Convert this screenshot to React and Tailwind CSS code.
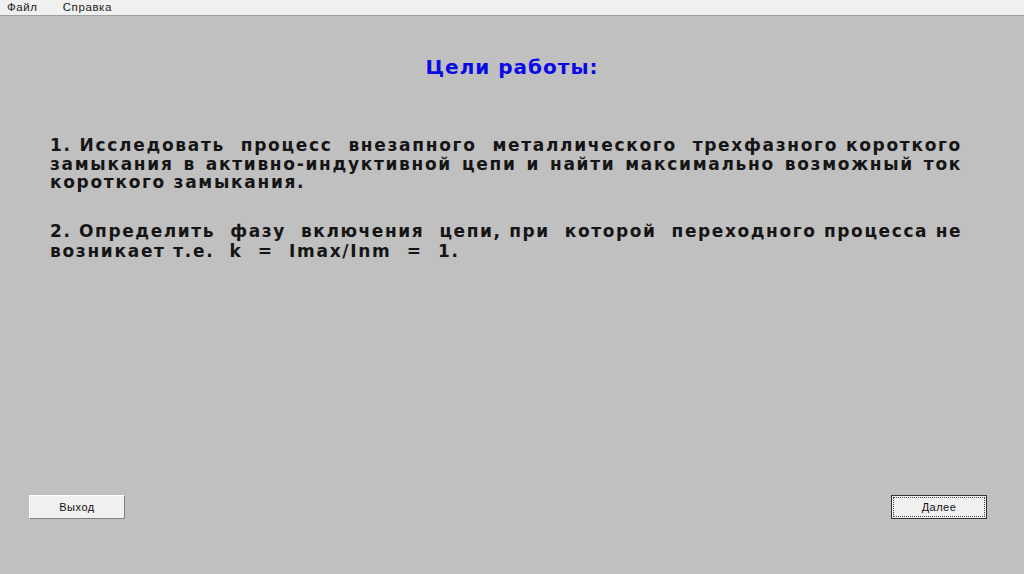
import React from "react";

const lineCls = "text-justify whitespace-pre";
const justify = { textAlignLast: "justify" };

const App = () => {
  return (
    <div className="w-[1024px] h-[574px] flex flex-col bg-[#c0c0c0] overflow-hidden" style={{ fontFamily: "'DejaVu Sans', Verdana, sans-serif" }}>
      <div className="h-[16px] flex items-center gap-[25px] pl-[7px] bg-[#f0f0f0] border-b border-[#a0a0a0] text-[11.5px] leading-none tracking-[0.6px] text-[#222]" style={{ fontFamily: "'Liberation Sans', Arial, sans-serif" }}>
        <span>Файл</span>
        <span>Справка</span>
      </div>
      <div className="flex-1 flex flex-col pl-[50px] pr-[62px]">
        <h1 className="mt-[39px] text-center text-[20px] font-bold tracking-[1px] text-[#0a0ae6] leading-[24px] pl-[12px]">
          Цели работы:
        </h1>
        <div className="mt-[57px] text-[17px] font-bold leading-[18.5px] tracking-[1.7px] text-[#151515]">
          <div className={lineCls} style={justify}>1. Исследовать  процесс  внезапного  металлического  трехфазного короткого</div>
          <div className={lineCls} style={justify}>замыкания в активно-индуктивной цепи и найти максимально возможный ток</div>
          <div className="whitespace-pre">короткого замыкания.</div>
        </div>
        <div className="mt-[29px] text-[17px] font-bold leading-[20px] tracking-[1.7px] text-[#151515]">
          <div className="whitespace-pre tracking-[1.6px]">2. Определить  фазу  включения  цепи, при  которой  переходного процесса не</div>
          <div className="whitespace-pre">возникает т.е.  k  =  Imax/Inm  =  1.</div>
        </div>
        <div className="mt-auto mb-[55px] flex justify-between items-center -ml-[21px] mr-[-25px]">
          <button className="w-[96px] h-[24px] bg-[#f0f0f0] border border-t-white border-l-white border-r-[#808080] border-b-[#808080] text-[11px] tracking-[0.5px] text-[#111]" style={{ fontFamily: "'Liberation Sans', Arial, sans-serif" }}>
            Выход
          </button>
          <button className="w-[96px] h-[24px] bg-[#f0f0f0] border border-[#333] p-[1px] text-[11px] tracking-[0.5px] text-[#111]" style={{ fontFamily: "'Liberation Sans', Arial, sans-serif" }}>
            <div className="w-full h-full border border-dotted border-[#444] flex items-center justify-center">Далее</div>
          </button>
        </div>
      </div>
    </div>
  );
};

export default App;
